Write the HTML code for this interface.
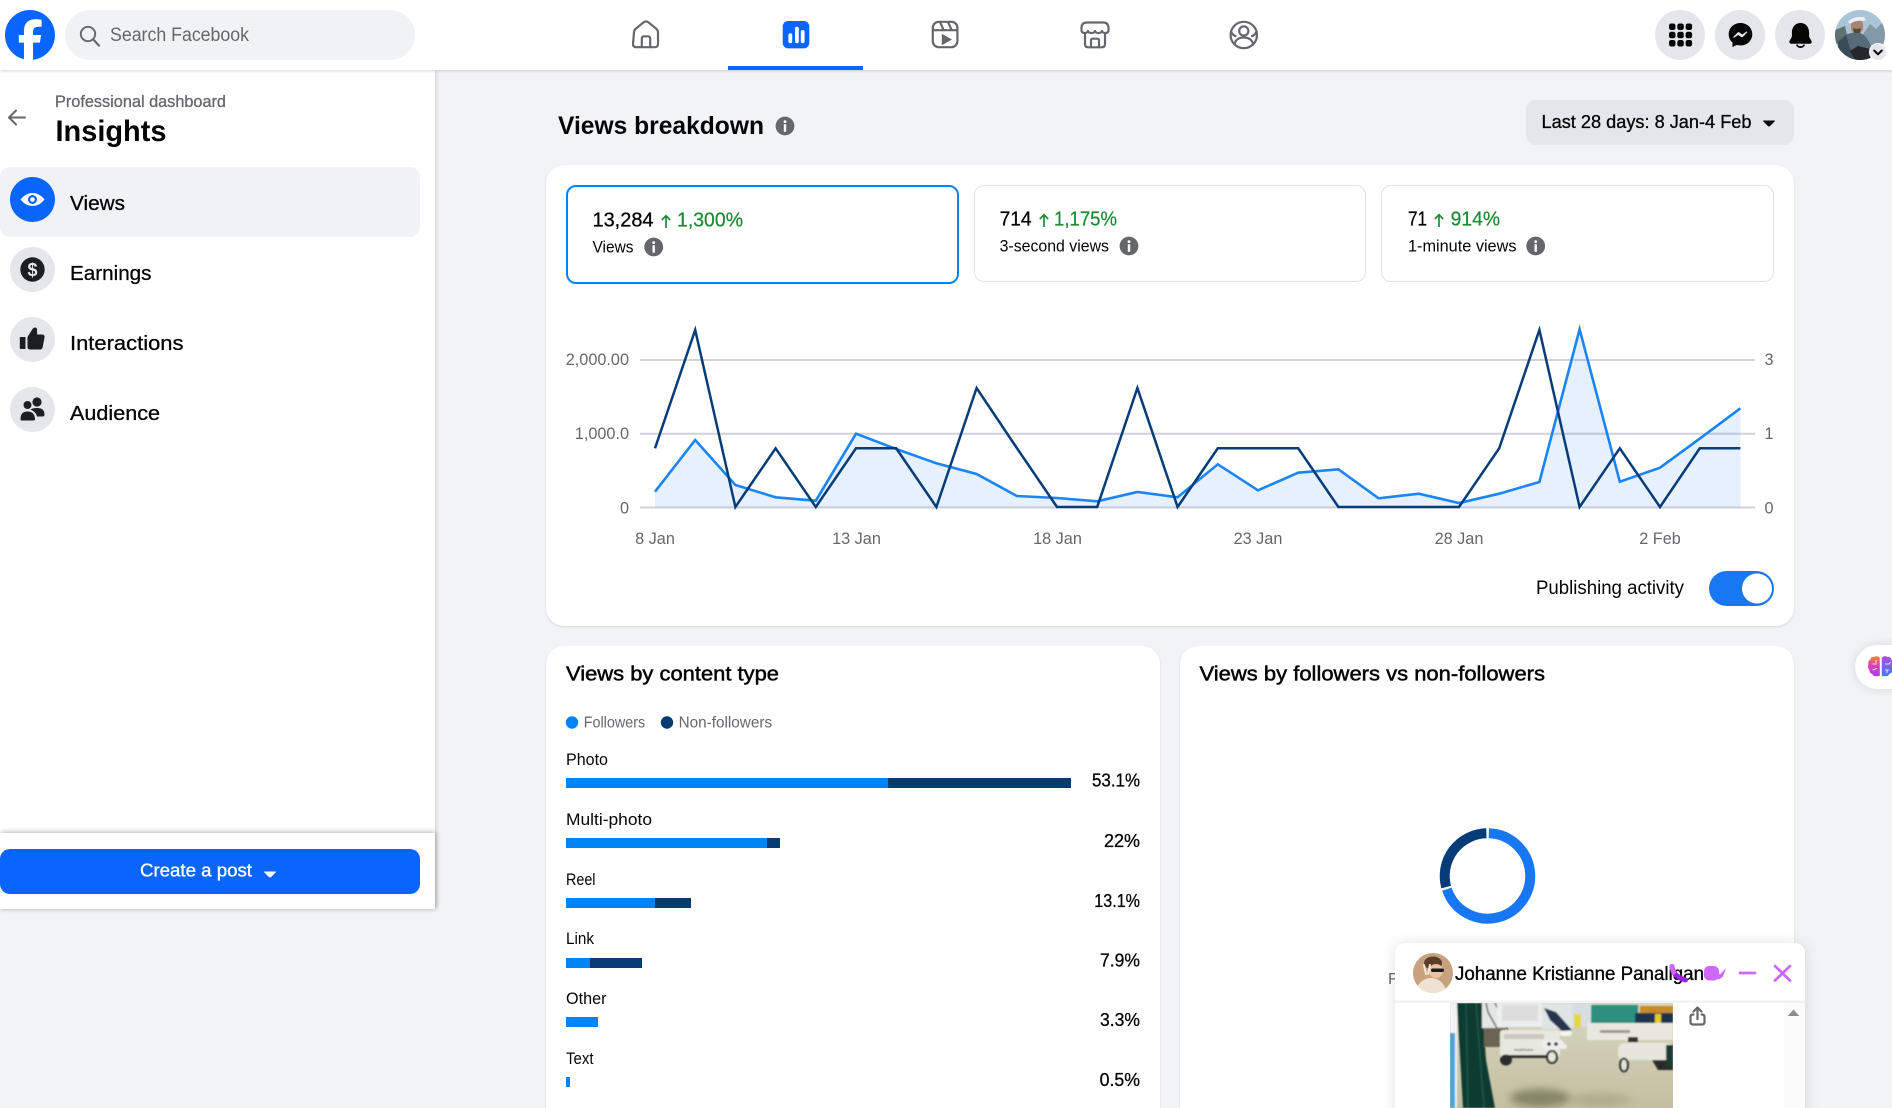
<!DOCTYPE html>
<html lang="en"><head><meta charset="utf-8"><title>Insights</title>
<style>
html,body{margin:0;padding:0;width:1892px;height:1108px;overflow:hidden;background:#f2f3f7}
body{position:relative;font-family:"Liberation Sans",sans-serif}
.b{position:absolute;box-sizing:border-box}
svg{position:absolute;left:0;top:0}
text{font-family:"Liberation Sans",sans-serif;fill:#050505;white-space:pre}
.m{stroke:#050505;stroke-width:.3}
.s{stroke:#050505;stroke-width:.5}
.g{fill:#65676b}
.u{fill:#1e8a35;stroke:#1e8a35;stroke-width:.25}
.ax{fill:#65676b;font-size:16.25px}
</style></head><body>

<!-- cards -->
<div class="b" style="left:546px;top:165px;width:1248px;height:461px;background:#fff;border-radius:18px;box-shadow:0 1px 2px rgba(0,0,0,.12)"></div>
<div class="b" style="left:566px;top:185px;width:393px;height:99px;border:2px solid #0084f4;border-radius:10px"></div>
<div class="b" style="left:974px;top:185px;width:392px;height:97px;border:1px solid #e0e2e6;border-radius:10px"></div>
<div class="b" style="left:1381px;top:185px;width:393px;height:97px;border:1px solid #e0e2e6;border-radius:10px"></div>
<div class="b" style="left:546px;top:646px;width:614px;height:480px;background:#fff;border-radius:18px;box-shadow:0 1px 2px rgba(0,0,0,.12)"></div>
<div class="b" style="left:1180px;top:646px;width:614px;height:480px;background:#fff;border-radius:18px;box-shadow:0 1px 2px rgba(0,0,0,.12)"></div>
<div class="b" style="left:1526px;top:100px;width:268px;height:45px;background:#e4e6eb;border-radius:10px"></div>

<!-- brain tab -->
<div class="b" style="left:1855px;top:645px;width:60px;height:44px;background:#fff;border-radius:22px;box-shadow:0 0 10px rgba(0,0,0,.12)"></div>

<!-- sidebar -->
<div class="b" style="left:0;top:70px;width:435px;height:839px;background:#fff;box-shadow:1px 0 4px rgba(0,0,0,.14)"></div>
<div class="b" style="left:0;top:833px;width:435px;height:76px;background:#fff;box-shadow:1px -1px 5px rgba(0,0,0,.28)"></div>
<div class="b" style="left:0;top:849px;width:420px;height:45px;background:#0866ff;border-radius:10px"></div>
<div class="b" style="left:0;top:167px;width:420px;height:70px;background:#f1f2f6;border-radius:10px"></div>
<div class="b" style="left:10px;top:177px;width:45px;height:45px;background:#0866ff;border-radius:50%"></div>
<div class="b" style="left:10px;top:247px;width:45px;height:45px;background:#e4e6eb;border-radius:50%"></div>
<div class="b" style="left:10px;top:317px;width:45px;height:45px;background:#e4e6eb;border-radius:50%"></div>
<div class="b" style="left:10px;top:387px;width:45px;height:45px;background:#e4e6eb;border-radius:50%"></div>

<!-- header -->
<div class="b" style="left:0;top:0;width:1892px;height:70px;background:#fff;box-shadow:0 1px 3px rgba(0,0,0,.16)"></div>
<div class="b" style="left:65px;top:10px;width:350px;height:50px;background:#f0f2f5;border-radius:25px"></div>
<div class="b" style="left:728px;top:66px;width:135px;height:4px;background:#0866ff"></div>
<div class="b" style="left:1655px;top:10px;width:50px;height:50px;background:#e4e6eb;border-radius:50%"></div>
<div class="b" style="left:1715px;top:10px;width:50px;height:50px;background:#e4e6eb;border-radius:50%"></div>
<div class="b" style="left:1775px;top:10px;width:50px;height:50px;background:#e4e6eb;border-radius:50%"></div>

<svg width="1892" height="1108" viewBox="0 0 1892 1108">
<defs>
<g id="i"><circle r="9.4" fill="#65676b"/><circle cy="-4.4" r="1.4" fill="#fff"/><rect x="-1.2" y="-1.8" width="2.4" height="7.6" rx=".6" fill="#fff"/></g>
<clipPath id="av"><circle cx="1860" cy="35" r="25"/></clipPath>
<linearGradient id="bl1" x1="0" y1="0" x2="0" y2="1"><stop offset="0" stop-color="#f58a2c"/><stop offset=".45" stop-color="#e040b8"/><stop offset="1" stop-color="#a83ee8"/></linearGradient>
<linearGradient id="bl2" x1="0" y1="0" x2="0" y2="1"><stop offset="0" stop-color="#b44ae6"/><stop offset="1" stop-color="#3f7cf2"/></linearGradient>
</defs>

<!-- FB logo -->
<g transform="translate(5 10) scale(1.389)">
<path fill="#0866ff" d="M36 18C36 8.059 27.941 0 18 0S0 8.059 0 18c0 8.442 5.811 15.526 13.652 17.471L15 34h5l.181 1.87C29.094 34.791 36 27.202 36 18Z"/>
<path fill="#fff" d="M13.651 35.471v-11.97H9.936V18h3.715v-2.37c0-6.127 2.772-8.964 8.784-8.964 1.138 0 3.103.223 3.91.446v4.983c-.425-.043-1.167-.065-2.081-.065-2.952 0-4.09 1.116-4.09 4.025V18h5.883l-1.008 5.5h-4.867v12.37a18.183 18.183 0 0 1-6.53-.399Z"/>
</g>
<!-- search -->
<circle cx="88" cy="34" r="7.2" fill="none" stroke="#65676b" stroke-width="1.9"/>
<path d="M93.2 39.4 99 45.6" stroke="#65676b" stroke-width="2.2" stroke-linecap="round"/>
<text x="110" y="41" font-size="19" class="g" textLength="139" lengthAdjust="spacingAndGlyphs">Search Facebook</text>

<!-- nav icons -->
<g fill="none" stroke="#65676b" stroke-width="2.2" stroke-linejoin="round" stroke-linecap="round">
<path d="M634 32.5q0-2.2 1.8-3.8L643.5 22.4q2.5-1.8 5 0l7.7 6.3q1.8 1.6 1.8 3.8V44q0 3.2-3.2 3.2h-18.6q-3.2 0-3.2-3.2Z"/>
<path d="M641.8 47V38.5q0-2.2 2.2-2.2h4q2.2 0 2.2 2.2V47"/>
<rect x="932.8" y="21.800" width="24.6" height="25.4" rx="6"/>
<path d="M933 30.2h24.4M940 22l3.600 8M948 22l3.600 8"/>
<path d="M1085 34v10q0 3.300 3.200 3.300h13.600q3.200 0 3.200-3.300V34"/>
<path d="M1081.500 28q0-5.500 5.500-5.500h16q5.500 0 5.500 5.500v2q0 3-3 3q-3 0-3.500-2-.5 2-3.500 2q-3 0-3.500-2-.5 2-3.500 2q-3 0-3.500-2-.5 2-3.500 2q-3 0-3-3Z"/>
<path d="M1091 47v-6.500q0-1.800 1.800-1.800h4.400q1.800 0 1.800 1.800V47"/>
<circle cx="1243.8" cy="35" r="13.2"/>
<circle cx="1243.8" cy="31" r="4.6"/>
<path d="M1234.500 44.300c.8-4.300 4.300-6.800 9.300-6.800s8.500 2.500 9.300 6.800"/>
<path d="M1231 31.500c1.300 2.800 2.500 4 4.500 4.500M1256.500 31.500c-1.300 2.800-2.500 4-4.500 4.500"/>
</g>
<path d="M952 39.5 941.800 33.800v11.400Z" fill="#65676b"/>
<rect x="782.7" y="21" width="26.6" height="27.4" rx="5.5" fill="#0866ff"/>
<rect x="788.4" y="33.3" width="3.8" height="10" rx="1.9" fill="#fff"/>
<rect x="795" y="26.7" width="3.8" height="16.6" rx="1.9" fill="#fff"/>
<rect x="800.8" y="30" width="3.8" height="13.3" rx="1.9" fill="#fff"/>

<!-- grid -->
<g fill="#050505">
<rect x="1669" y="23.5" width="6.5" height="6.5" rx="2.2"/><rect x="1677.3" y="23.5" width="6.5" height="6.5" rx="2.2"/><rect x="1685.6" y="23.5" width="6.5" height="6.5" rx="2.2"/>
<rect x="1669" y="31.8" width="6.5" height="6.5" rx="2.2"/><rect x="1677.3" y="31.8" width="6.5" height="6.5" rx="2.2"/><rect x="1685.6" y="31.8" width="6.5" height="6.5" rx="2.2"/>
<rect x="1669" y="40" width="6.5" height="6.5" rx="2.2"/><rect x="1677.3" y="40" width="6.5" height="6.5" rx="2.2"/><rect x="1685.6" y="40" width="6.5" height="6.5" rx="2.2"/>
</g>
<!-- messenger -->
<path d="M1740.500 23c-6.600 0-11.800 4.900-11.800 11.200 0 3.400 1.400 6.300 3.800 8.300v4.600l4.300-2.200c1.200.4 2.400.5 3.700.5 6.600 0 11.800-4.900 11.800-11.200S1747.100 23 1740.500 23Z" fill="#050505"/>
<path d="M1733.500 37.500l4.200-4.400q.8-.8 1.800 0l2.700 2 4.800-3.300-4.200 4.500q-.8.800-1.800 0l-2.700-2Z" fill="#e4e6eb" stroke="#e4e6eb" stroke-width="1"/>
<!-- bell -->
<path d="M1800.500 23c-6 0-8.600 5-8.600 9.600v3.400c0 2.300-2.600 4.200-2.600 5.900 0 1.200 1 1.800 2 1.800h18.400c1 0 2-.6 2-1.800 0-1.700-2.600-3.600-2.600-5.900v-3.400c0-4.600-2.600-9.600-8.600-9.600Z" fill="#050505"/>
<path d="M1796.800 44.600a3.800 3.200 0 0 0 7.400 0" fill="none" stroke="#050505" stroke-width="1.800"/>
<!-- avatar -->
<g clip-path="url(#av)">
<rect x="1835" y="10" width="50" height="50" fill="#a9c4d4"/>
<path d="M1862 36 1870 24 1876 29 1885 20V45H1862Z" fill="#8499a6"/>
<path d="M1835 30 1845 26 1848 40 1835 45Z" fill="#5f7272"/>
<path d="M1838 60V44q1-8 9-10l9-2q8 1 12 8l8 16v4Z" fill="#566a78"/>
<path d="M1838 42l8-7 3 10 5 15h-16Z" fill="#3c4c56"/>
<path d="M1855 60l-5-9 8-5 12 3 3 11Z" fill="#24272b"/>
<rect x="1851" y="19" width="12" height="14" rx="5" fill="#a98473"/>
<path d="M1848 22q5-6 16-5l2 3-3 1q-8-1-13 3Z" fill="#eef0f3"/>
<path d="M1853 28q4 2 8 0l-1 5h-6Z" fill="#5a4438"/>
</g>
<circle cx="1878" cy="52" r="8.5" fill="#e4e6eb" stroke="#fff" stroke-width="1"/>
<path d="M1874.200 50.500 1878 54.300 1881.800 50.500" fill="none" stroke="#050505" stroke-width="2" stroke-linecap="round" stroke-linejoin="round"/>

<!-- sidebar text -->
<path d="M25 117.500H9M16 110.500l-7 7 7 7" fill="none" stroke="#65676b" stroke-width="2" stroke-linecap="round" stroke-linejoin="round"/>
<text x="55" y="107" font-size="16.5" class="g" style="stroke:#65676b;stroke-width:.3" textLength="171" lengthAdjust="spacingAndGlyphs">Professional dashboard</text>
<text x="55.5" y="141" font-size="30" font-weight="700" textLength="111" lengthAdjust="spacingAndGlyphs">Insights</text>
<text x="70" y="210" font-size="20.5" class="m" textLength="55" lengthAdjust="spacingAndGlyphs">Views</text>
<text x="70" y="280" font-size="20.5" class="m" textLength="81.500" lengthAdjust="spacingAndGlyphs">Earnings</text>
<text x="70" y="350" font-size="20.5" class="m" textLength="113.500" lengthAdjust="spacingAndGlyphs">Interactions</text>
<text x="70" y="420" font-size="20.5" class="m" textLength="90" lengthAdjust="spacingAndGlyphs">Audience</text>
<!-- sidebar icons -->
<path d="M20.500 199.500q5-6.500 12-6.500t12 6.500q-5 6.500-12 6.500t-12-6.500Z" fill="#fff"/><circle cx="32.5" cy="199.5" r="4.500" fill="#0866ff"/><circle cx="32.5" cy="199.5" r="2.300" fill="#fff"/>
<circle cx="32.5" cy="269.5" r="12.200" fill="#1c1e21"/>
<text x="32.5" y="276" font-size="18" font-weight="700" text-anchor="middle" style="fill:#e4e6eb">$</text>
<g transform="translate(0 3.500)">
<path d="M20.500 333.500h5v12h-5q-.7 0-.7-.7v-10.600q0-.7.7-.7ZM27.500 333.500l5-8q1-1.500 2.400-1.500 2.200 0 2.200 2.400v4.600h5q2.500 0 2.500 2.500l-2 10.500q-.5 2-2.800 2H30q-2.500 0-2.500-2.500Z" fill="#1c1e21"/>
</g>
<circle cx="37" cy="402" r="4.6" fill="#1c1e21"/><circle cx="27.5" cy="405" r="4" fill="#1c1e21"/>
<path d="M20.500 419q0-7.500 7-7.500t7.500 7.500q0 1.500-1.500 1.500h-12q-1 0-1-1.500Z" fill="#1c1e21"/>
<path d="M30.500 409.500q2-1.500 6.500-1.500 7.500 0 7.500 6.500 0 2-2 2H37q-1-4.500-6.500-7Z" fill="#1c1e21"/>

<text x="140" y="876.5" font-size="18.5" style="fill:#fff;stroke:#fff;stroke-width:.35" textLength="112" lengthAdjust="spacingAndGlyphs">Create a post</text>
<path d="M264.500 871.500h11q.8 0 .3.800l-4.800 4.800q-1 .8-2 0l-4.800-4.800q-.5-.8.300-.8Z" fill="#fff"/>

<!-- heading -->
<text x="558" y="134" font-size="25" font-weight="700" textLength="206" lengthAdjust="spacingAndGlyphs">Views breakdown</text>
<use href="#i" x="785" y="126"/>
<text x="1541.5" y="128" font-size="18.75" class="m" textLength="210" lengthAdjust="spacingAndGlyphs">Last 28 days: 8 Jan-4 Feb</text>
<path d="M1763.500 120.500h11q.8 0 .3.800l-4.800 4.800q-1 .8-2 0l-4.800-4.800q-.5-.8.300-.8Z" fill="#050505"/>

<!-- stat boxes -->
<text x="592.5" y="226.5" font-size="20.5" class="m" textLength="61" lengthAdjust="spacingAndGlyphs">13,284</text>
<path d="M666 228V216M661.800 220l4.200-4.300 4.200 4.300" fill="none" stroke="#1e8a35" stroke-width="1.700"/>
<text x="677" y="226.5" font-size="20.5" class="u" textLength="66" lengthAdjust="spacingAndGlyphs">1,300%</text>
<text x="592.5" y="252.5" font-size="16.5" textLength="41" lengthAdjust="spacingAndGlyphs">Views</text>
<use href="#i" x="653.7" y="247"/>

<text x="999.6" y="225.5" font-size="20.5" class="m" textLength="32" lengthAdjust="spacingAndGlyphs">714</text>
<path d="M1044 227V215M1039.800 219l4.200-4.300 4.200 4.300" fill="none" stroke="#1e8a35" stroke-width="1.700"/>
<text x="1054" y="225.5" font-size="20.5" class="u" textLength="63" lengthAdjust="spacingAndGlyphs">1,175%</text>
<text x="999.6" y="251.5" font-size="16.5" textLength="109.400" lengthAdjust="spacingAndGlyphs">3-second views</text>
<use href="#i" x="1129" y="246"/>

<text x="1408" y="225.5" font-size="20.5" class="m" textLength="19" lengthAdjust="spacingAndGlyphs">71</text>
<path d="M1439 227V215M1434.800 219l4.200-4.300 4.200 4.300" fill="none" stroke="#1e8a35" stroke-width="1.700"/>
<text x="1450.6" y="225.5" font-size="20.5" class="u" textLength="49.500" lengthAdjust="spacingAndGlyphs">914%</text>
<text x="1408" y="251.5" font-size="16.5" textLength="108.500" lengthAdjust="spacingAndGlyphs">1-minute views</text>
<use href="#i" x="1535.7" y="246"/>

<!-- chart -->
<g stroke="#d0d2d7" stroke-width="2">
<path d="M640 360H1755M640 433.700H1755M640 507.500H1755"/>
</g>
<path fill="#1877f2" fill-opacity=".11" d="M655 507.500 655 491.700 695.200 440 735.400 485 775.600 497.300 815.800 500.700 856 433.700 896.200 449 936.400 463.300 976.600 474 1016.800 496 1057 498 1097.200 501.300 1137.400 492 1177.600 497.300 1217.800 464.300 1258 490.300 1298.200 472.700 1338.400 469.300 1378.600 498.300 1418.800 493.700 1459 503 1499.200 493.700 1539.400 482 1579.600 329.300 1619.800 481.700 1660 467.700 1700.200 438.300 1740.400 408.300 1740.400 507.500Z"/>
<polyline fill="none" stroke="#1a85f6" stroke-width="2.600" points="655,491.700 695.200,440 735.400,485 775.600,497.300 815.800,500.700 856,433.700 896.200,449 936.400,463.300 976.600,474 1016.800,496 1057,498 1097.200,501.300 1137.400,492 1177.600,497.300 1217.800,464.300 1258,490.300 1298.200,472.700 1338.400,469.300 1378.600,498.300 1418.800,493.700 1459,503 1499.200,493.700 1539.400,482 1579.600,329.300 1619.800,481.700 1660,467.700 1700.200,438.300 1740.400,408.300"/>
<polyline fill="none" stroke="#063c78" stroke-width="2.500" points="655,448.300 695.200,330 735.400,507 775.600,448.300 815.800,507 856,448.300 896.200,448.300 936.400,507 976.600,388 1016.800,448 1057,507 1097.200,507 1137.400,388 1177.600,507 1217.800,448.300 1258,448.300 1298.200,448.300 1338.400,507 1378.600,507 1418.800,507 1459,507 1499.200,448.300 1539.400,330 1579.600,507 1619.800,448.300 1660,507 1699.800,448.300 1740.400,448.300"/>

<text class="ax" x="629" y="365" text-anchor="end">2,000.00</text>
<text class="ax" x="629" y="439" text-anchor="end">1,000.0</text>
<text class="ax" x="629" y="513.5" text-anchor="end">0</text>
<text class="ax" x="1769" y="365" text-anchor="middle">3</text>
<text class="ax" x="1769" y="439" text-anchor="middle">1</text>
<text class="ax" x="1769" y="513.5" text-anchor="middle">0</text>
<text class="ax" x="655" y="544" text-anchor="middle">8 Jan</text>
<text class="ax" x="856.5" y="544" text-anchor="middle">13 Jan</text>
<text class="ax" x="1057.5" y="544" text-anchor="middle">18 Jan</text>
<text class="ax" x="1258" y="544" text-anchor="middle">23 Jan</text>
<text class="ax" x="1459" y="544" text-anchor="middle">28 Jan</text>
<text class="ax" x="1660" y="544" text-anchor="middle">2 Feb</text>

<text x="1536" y="594" font-size="19" textLength="148" lengthAdjust="spacingAndGlyphs">Publishing activity</text>
<rect x="1709" y="571" width="65" height="35" rx="17.5" fill="#1877f2"/>
<circle cx="1757" cy="588.5" r="15" fill="#fff"/>

<!-- content type -->
<text x="566" y="680.7" font-size="20.5" class="s" textLength="213" lengthAdjust="spacingAndGlyphs">Views by content type</text>
<text x="1199.5" y="680.7" font-size="20.5" class="s" textLength="345.5" lengthAdjust="spacingAndGlyphs">Views by followers vs non-followers</text>
<circle cx="572" cy="722.5" r="6.200" fill="#0084f4"/>
<text x="583.7" y="727.3" font-size="16" class="g" textLength="61.500" lengthAdjust="spacingAndGlyphs">Followers</text>
<circle cx="667" cy="722.5" r="6.200" fill="#063a75"/>
<text x="678.6" y="727.3" font-size="16" class="g" textLength="93.500" lengthAdjust="spacingAndGlyphs">Non-followers</text>

<text x="566" y="765" font-size="16.5" textLength="42" lengthAdjust="spacingAndGlyphs">Photo</text>
<rect x="566" y="778" width="322" height="10" fill="#0084f4"/><rect x="888" y="778" width="183" height="10" fill="#063a75"/>
<text x="1092" y="786.5" font-size="18.75" class="m" textLength="48" lengthAdjust="spacingAndGlyphs">53.1%</text>

<text x="566" y="825" font-size="16.5" textLength="86" lengthAdjust="spacingAndGlyphs">Multi-photo</text>
<rect x="566" y="838" width="201" height="10" fill="#0084f4"/><rect x="767" y="838" width="13" height="10" fill="#063a75"/>
<text x="1104" y="847" font-size="18.75" class="m" textLength="36" lengthAdjust="spacingAndGlyphs">22%</text>

<text x="566" y="885" font-size="16.5" textLength="29.5" lengthAdjust="spacingAndGlyphs">Reel</text>
<rect x="566" y="898" width="89" height="10" fill="#0084f4"/><rect x="655" y="898" width="36" height="10" fill="#063a75"/>
<text x="1094.3" y="907" font-size="18.75" class="m" textLength="45.7" lengthAdjust="spacingAndGlyphs">13.1%</text>

<text x="566" y="944" font-size="16.5" textLength="28" lengthAdjust="spacingAndGlyphs">Link</text>
<rect x="566" y="958" width="24" height="10" fill="#0084f4"/><rect x="590" y="958" width="52" height="10" fill="#063a75"/>
<text x="1100" y="966.7" font-size="18.75" class="m" textLength="40" lengthAdjust="spacingAndGlyphs">7.9%</text>

<text x="566" y="1004" font-size="16.5" textLength="40.5" lengthAdjust="spacingAndGlyphs">Other</text>
<rect x="566" y="1017" width="32" height="10" fill="#0084f4"/>
<text x="1100" y="1026" font-size="18.75" class="m" textLength="40" lengthAdjust="spacingAndGlyphs">3.3%</text>

<text x="566" y="1064" font-size="16.5" textLength="27.5" lengthAdjust="spacingAndGlyphs">Text</text>
<rect x="566" y="1077" width="4" height="10" fill="#0084f4"/>
<text x="1099.6" y="1086" font-size="18.75" class="m" textLength="40.4" lengthAdjust="spacingAndGlyphs">0.5%</text>

<!-- donut -->
<g fill="none" stroke-width="10">
<path stroke="#1877f2" d="M1488.800 833.300A42.700 42.700 0 1 1 1446.900 889.200"/>
<path stroke="#063c78" d="M1446.200 887.100A42.700 42.700 0 0 1 1486.400 833.300"/>
</g>
<text x="1388" y="984" font-size="16" class="g">F</text>

<!-- brain -->
<g transform="translate(0 2)">
<path d="M1879.800 655.500q-3.200-2.500-5.800-.5-3-.5-3.700 2.500-2.800 1.500-1.800 4.800-1.700 3 .8 5.400-.3 3.200 2.900 4.300 1.500 3 4.700 2 1.600.8 2.900-.5Z" fill="url(#bl1)"/>
<path d="M1881.800 655.500q3.200-2.500 5.800-.5 3-.5 3.700 2.500 2.800 1.500 1.800 4.800 1.700 3-.8 5.400.3 3.200-2.900 4.300-1.500 3-4.700 2-1.600.8-2.900-.5Z" fill="url(#bl2)"/>
<path d="M1872.500 662h4.500M1872.500 668l4.500-1.500M1876 658v3M1885 662h4l1.500-2M1885 668h4M1887 668v3" stroke="#fff" stroke-width=".8" fill="none"/>
</g>
</svg>

<!-- chat window -->
<div class="b" style="left:1395px;top:943px;width:410px;height:200px;background:#fff;border-radius:10px 10px 0 0;box-shadow:0 0 14px rgba(0,0,0,.12)"></div>
<svg width="1892" height="1108" viewBox="0 0 1892 1108">
<defs>
<clipPath id="ca"><circle cx="1433" cy="973" r="20"/></clipPath>
<clipPath id="im"><rect x="1450" y="1003" width="223" height="105"/></clipPath>
<filter id="bl" x="0" y="0" width="1" height="1"><feGaussianBlur stdDeviation=".7"/></filter>
<filter id="bl3" x="-30%" y="-60%" width="160%" height="220%"><feGaussianBlur stdDeviation="4"/></filter>
<linearGradient id="fl" x1="0" y1="0" x2="0" y2="1"><stop offset="0" stop-color="#d8d6c2"/><stop offset="1" stop-color="#c3bfa0"/></linearGradient>
</defs>
<rect x="1784" y="1003" width="21" height="105" fill="#fbfbfb"/>
<path d="M1793.5 1009.500l5.800 6.500h-11.600Z" fill="#8c8c8c"/>
<!-- image -->
<g clip-path="url(#im)">
<rect x="1450" y="1003" width="223" height="105" fill="url(#fl)"/>
<ellipse cx="1540" cy="1098" rx="30" ry="9" fill="#77775a" opacity=".8" filter="url(#bl3)"/>
<ellipse cx="1600" cy="1100" rx="32" ry="6" fill="#a19e7c" opacity=".6" filter="url(#bl3)"/>
<g filter="url(#bl)">
<rect x="1450" y="1003" width="7" height="105" fill="#f2f4f4"/>
<rect x="1450" y="1033" width="5" height="75" fill="#4aa3dc"/>
<path d="M1457 1003H1482L1486 1060 1495 1108H1463Z" fill="#0e3a30"/>
<path d="M1466 1003 1468 1108M1476 1003 1484 1108" stroke="#1a5747" stroke-width="1.500"/>
<rect x="1482" y="1003" width="16" height="25" fill="#e4e6e4"/>
<path d="M1486 1003 1488 1012 1498 1030M1495 1003 1508 1030" stroke="#222" stroke-width="1.200" fill="none"/>
<rect x="1497" y="1003" width="45" height="24" fill="#eceded"/>
<rect x="1502" y="1005" width="36" height="16" fill="#dcdddb"/>
<rect x="1542" y="1003" width="30" height="26" fill="#dfe4e4"/>
<path d="M1544 1008 1556 1012 1572 1030 1562 1031 1550 1020Z" fill="#27344e"/>
<rect x="1560" y="1031" width="12" height="5" rx="2.500" fill="#f4f4f2"/>
<rect x="1555" y="1044" width="12" height="5" rx="2.500" fill="#f0f0ee"/>
<rect x="1572" y="1003" width="20" height="24" fill="#d8dee0"/>
<rect x="1574" y="1014" width="7" height="13" fill="#e6d63f"/>
<rect x="1484" y="1028" width="22" height="19" fill="#6a6552"/>
<rect x="1500" y="1030" width="60" height="27" rx="3" fill="#e6e7df"/>
<rect x="1504" y="1034" width="40" height="5" fill="#c9cabf"/>
<rect x="1542" y="1040" width="22" height="9" rx="3" fill="#eeeeec"/>
<circle cx="1549" cy="1044" r="1.800" fill="#222"/><circle cx="1556" cy="1044" r="1.800" fill="#222"/>
<text x="1514" y="1051" font-size="4" style="fill:#333">Healthcare</text>
<rect x="1504" y="1055" width="44" height="3" fill="#2e2e2a"/>
<ellipse cx="1506" cy="1060" rx="6" ry="5.500" fill="#2a2a2a"/>
<ellipse cx="1552" cy="1057" rx="6" ry="7" fill="#2a2a2a"/>
<ellipse cx="1552" cy="1057" rx="3.800" ry="5" fill="#e6e6dc"/>
<rect x="1591" y="1005" width="47" height="18" fill="#2d8f80"/>
<rect x="1640" y="1006" width="33" height="7" fill="#c98a2b"/>
<rect x="1635" y="1013" width="38" height="14" fill="#1f3550"/>
<rect x="1655" y="1014" width="6" height="13" fill="#e3cc2b"/>
<rect x="1587" y="1023" width="86" height="17" fill="#e8e8e0"/>
<rect x="1600" y="1030" width="30" height="3" fill="#9a9a90"/>
<rect x="1618" y="1043" width="55" height="17" rx="6" fill="#e6e6de"/>
<rect x="1628" y="1037" width="10" height="5" fill="#33342f"/>
<ellipse cx="1624" cy="1065" rx="5" ry="7.500" fill="#2c2c2c"/>
<ellipse cx="1624" cy="1065" rx="2.800" ry="5.500" fill="#e2e2d8"/>
<path d="M1652 1060h21v10h-15Z" fill="#2c2c2c"/>
<rect x="1666" y="1045" width="7" height="22" fill="#1f3a30"/>
</g></g>
<!-- share -->
<g fill="none" stroke="#65676b" stroke-width="2.200" stroke-linejoin="round" stroke-linecap="round">
<path d="M1693.500 1014.500h-.5q-2.500 0-2.500 2.500v5q0 2.500 2.500 2.500h9q2.500 0 2.500-2.500v-5q0-2.500-2.500-2.500h-.5"/>
<path d="M1697.500 1019v-11.500M1693.500 1011.500l4-4 4 4"/>
</g>
<!-- chat head -->
<rect x="1395" y="1000.5" width="410" height="2.500" fill="#000" opacity=".05"/>
<g clip-path="url(#ca)">
<rect x="1413" y="953" width="40" height="40" fill="#c8a27c"/>
<ellipse cx="1431" cy="993" rx="15" ry="15" fill="#f0e2d2"/>
<ellipse cx="1433" cy="963" rx="9" ry="6.500" fill="#5b3d2a"/>
<ellipse cx="1436" cy="971" rx="7" ry="7" fill="#e8c3a5"/>
<rect x="1431" y="968.500" width="13" height="3.500" rx="1.700" fill="#1c1c1c"/>
<path d="M1424 965l2 9M1430 965l-2 9" stroke="#f6e6d8" stroke-width="2" stroke-linecap="round"/>
</g>
<text x="1455" y="980" font-size="19" style="stroke:#050505;stroke-width:.35" textLength="249" lengthAdjust="spacingAndGlyphs">Johanne Kristianne Panaligan</text>
<path d="M1672 966.500Q1673 976.500 1685.500 980" fill="none" stroke="#9a22dc" stroke-width="5" stroke-linecap="round"/>
<path d="M1672 966.500 1673.500 972" stroke="#cf66ff" stroke-width="5" stroke-linecap="round"/>
<rect x="1704" y="966" width="15" height="14.500" rx="5" fill="#cf66ff"/>
<path d="M1715 970 1720 974.500 1726 968 1723 976.500 1719 979.500 1715 977Z" fill="#cf66ff"/>
<path d="M1740 973h15" stroke="#cf66ff" stroke-width="2.700" stroke-linecap="round"/>
<path d="M1775 966 1790 980.500M1790 966 1775 980.500" stroke="#cf66ff" stroke-width="2.700" stroke-linecap="round"/>
</svg>
</body></html>
